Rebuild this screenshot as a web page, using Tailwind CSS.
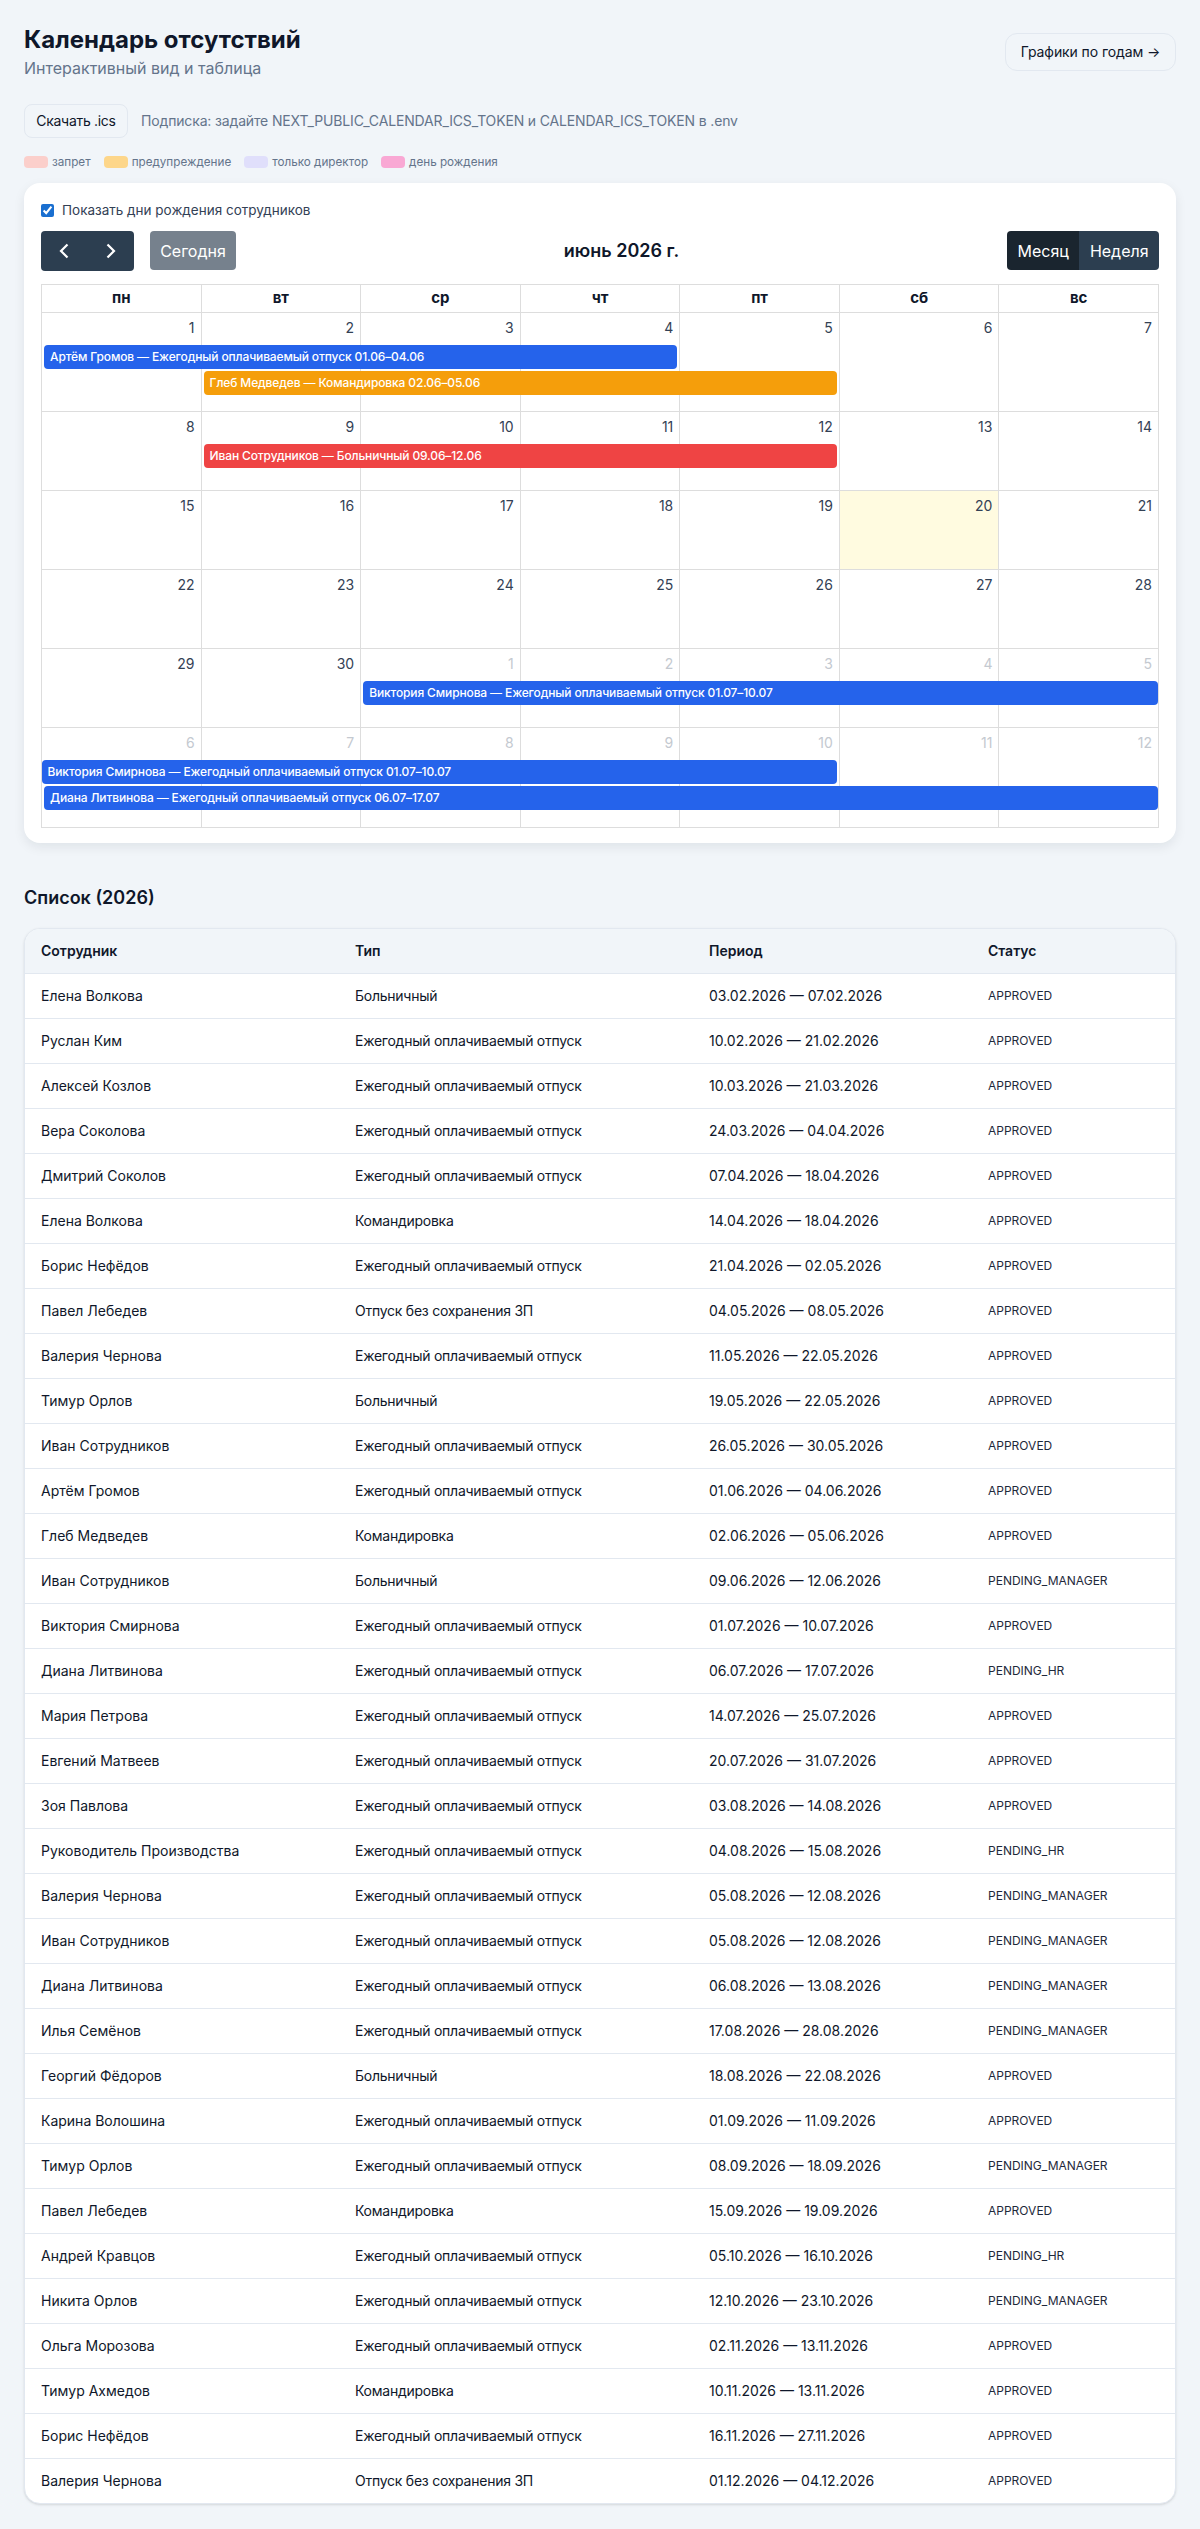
<!DOCTYPE html>
<html lang="ru">
<head>
  <meta charset="UTF-8">
  <title>Календарь отсутствий</title>
  <script src="https://cdn.jsdelivr.net/npm/@tailwindcss/browser@4"></script>
</head>
<body class="bg-[#f1f5f9] font-[Inter,sans-serif] text-[#0f172a]">
  <main class="px-6 pt-6 pb-[25px]">
    <!-- Header -->
    <header class="flex items-start justify-between">
      <div>
        <h1 class="text-2xl leading-8 font-bold">Календарь отсутствий</h1>
        <p class="text-base leading-6 text-[#64748b]">Интерактивный вид и таблица</p>
      </div>
      <a class="mt-[9px] h-[38px] w-[171px] flex items-center justify-center rounded-xl border border-[#e2e8f0] text-sm tracking-[-0.1px]">Графики по годам →</a>
    </header>

    <div class="mt-6 flex items-center gap-[13px]">
      <a class="h-[34px] w-[104px] flex items-center justify-center rounded-lg border border-[#e2e8f0] text-sm tracking-[-0.3px]">Скачать .ics</a>
      <span class="text-sm tracking-[-0.15px] text-[#64748b]">Подписка: задайте NEXT_PUBLIC_CALENDAR_ICS_TOKEN и CALENDAR_ICS_TOKEN в .env</span>
    </div>

    <!-- Legend -->
    <ul class="mt-[18px] flex items-center gap-[13px] text-[11.7px] leading-3 text-[#64748b]">
      <li class="flex items-center gap-1"><span class="w-6 h-3 rounded bg-[#fbcfcb]"></span>запрет</li>
      <li class="flex items-center gap-1"><span class="w-6 h-3 rounded bg-[#fdd68a]"></span>предупреждение</li>
      <li class="flex items-center gap-1"><span class="w-6 h-3 rounded bg-[#e0dffb]"></span>только директор</li>
      <li class="flex items-center gap-1"><span class="w-6 h-3 rounded bg-[#f9a8d4]"></span>день рождения</li>
    </ul>

    <!-- Calendar card -->
    <section class="mt-[15px] bg-white rounded-2xl shadow-[0_4px_12px_rgba(15,23,42,0.08)] px-[17px] pt-[21px] pb-[15px]">
      <label class="flex items-center gap-2 h-3 text-[13.5px] text-[#334155]">
        <input type="checkbox" checked class="w-[13px] h-[13px] accent-[#1a6fd0]">
        Показать дни рождения сотрудников
      </label>

      <div class="mt-[15px] flex items-center justify-between">
        <div class="flex items-start gap-4">
          <div class="flex h-10 rounded bg-[#2c3e50] text-white">
            <span class="w-[46.5px] flex items-center justify-center">
              <svg class="w-4 h-4" viewBox="0 0 16 16" fill="none" stroke="currentColor" stroke-width="2.2"><path d="M11.5 1.5 5 8l6.5 6.5"/></svg>
            </span>
            <span class="w-[46.5px] flex items-center justify-center">
              <svg class="w-4 h-4" viewBox="0 0 16 16" fill="none" stroke="currentColor" stroke-width="2.2"><path d="M4.5 1.5 11 8l-6.5 6.5"/></svg>
            </span>
          </div>
          <span class="h-[39px] w-[86px] flex items-center justify-center rounded bg-[#2c3e50]/65 text-white">Сегодня</span>
        </div>
        <h2 class="text-lg font-semibold">июнь 2026 г.</h2>
        <div class="flex self-start h-[39px] rounded overflow-hidden text-white">
          <span class="w-[72.5px] flex items-center justify-center bg-[#1a252f]">Месяц</span>
          <span class="w-[79.5px] flex items-center justify-center bg-[#2c3e50]">Неделя</span>
        </div>
      </div>

      <!-- Month grid -->
      <div class="mt-[13px] border-t border-l border-[#ddd]">
        <div class="grid grid-cols-7 h-[28px] text-[15px] font-bold">
          <div class="border-r border-b border-[#ddd] flex items-center justify-center">пн</div>
          <div class="border-r border-b border-[#ddd] flex items-center justify-center">вт</div>
          <div class="border-r border-b border-[#ddd] flex items-center justify-center">ср</div>
          <div class="border-r border-b border-[#ddd] flex items-center justify-center">чт</div>
          <div class="border-r border-b border-[#ddd] flex items-center justify-center">пт</div>
          <div class="border-r border-b border-[#ddd] flex items-center justify-center">сб</div>
          <div class="border-r border-b border-[#ddd] flex items-center justify-center">вс</div>
        </div>

        <!-- week 1 -->
        <div class="grid grid-cols-7 grid-rows-[32px_26px_26px_1fr] h-[99px] text-sm text-[#334155] [&>.d]:row-span-full [&>.d]:border-r [&>.d]:border-b [&>.d]:border-[#ddd] [&>.d]:text-right [&>.d]:px-1.5 [&>.d]:pt-[5px]">
          <div class="d col-start-1">1</div><div class="d col-start-2">2</div><div class="d col-start-3">3</div><div class="d col-start-4">4</div><div class="d col-start-5">5</div><div class="d col-start-6">6</div><div class="d col-start-7">7</div>
          <div class="col-start-1 col-end-5 row-start-2 ml-[2px] mr-[3px] h-6 rounded bg-[#2563eb] text-white text-xs tracking-[-0.13px] font-medium leading-[23px] px-1.5">Артём Громов — Ежегодный оплачиваемый отпуск 01.06–04.06</div>
          <div class="col-start-2 col-end-6 row-start-3 ml-[2px] mr-[3px] h-6 rounded bg-[#f59e0b] text-white text-xs tracking-[-0.13px] font-medium leading-[23px] px-1.5">Глеб Медведев — Командировка 02.06–05.06</div>
        </div>

        <!-- week 2 -->
        <div class="grid grid-cols-7 grid-rows-[32px_26px_1fr] h-[79px] text-sm text-[#334155] [&>.d]:row-span-full [&>.d]:border-r [&>.d]:border-b [&>.d]:border-[#ddd] [&>.d]:text-right [&>.d]:px-1.5 [&>.d]:pt-[5px]">
          <div class="d col-start-1">8</div><div class="d col-start-2">9</div><div class="d col-start-3">10</div><div class="d col-start-4">11</div><div class="d col-start-5">12</div><div class="d col-start-6">13</div><div class="d col-start-7">14</div>
          <div class="col-start-2 col-end-6 row-start-2 ml-[2px] mr-[3px] h-6 rounded bg-[#ef4444] text-white text-xs tracking-[-0.13px] font-medium leading-[23px] px-1.5">Иван Сотрудников — Больничный 09.06–12.06</div>
        </div>

        <!-- week 3 -->
        <div class="grid grid-cols-7 h-[79px] text-sm text-[#334155] [&>.d]:border-r [&>.d]:border-b [&>.d]:border-[#ddd] [&>.d]:text-right [&>.d]:px-1.5 [&>.d]:pt-[5px]">
          <div class="d">15</div><div class="d">16</div><div class="d">17</div><div class="d">18</div><div class="d">19</div><div class="d bg-[#fffbe0]">20</div><div class="d">21</div>
        </div>

        <!-- week 4 -->
        <div class="grid grid-cols-7 h-[79px] text-sm text-[#334155] [&>.d]:border-r [&>.d]:border-b [&>.d]:border-[#ddd] [&>.d]:text-right [&>.d]:px-1.5 [&>.d]:pt-[5px]">
          <div class="d">22</div><div class="d">23</div><div class="d">24</div><div class="d">25</div><div class="d">26</div><div class="d">27</div><div class="d">28</div>
        </div>

        <!-- week 5 -->
        <div class="grid grid-cols-7 grid-rows-[32px_26px_1fr] h-[79px] text-sm text-[#334155] [&>.d]:row-span-full [&>.d]:border-r [&>.d]:border-b [&>.d]:border-[#ddd] [&>.d]:text-right [&>.d]:px-1.5 [&>.d]:pt-[5px]">
          <div class="d col-start-1">29</div><div class="d col-start-2">30</div><div class="d col-start-3 text-[#c4c9d0]">1</div><div class="d col-start-4 text-[#c4c9d0]">2</div><div class="d col-start-5 text-[#c4c9d0]">3</div><div class="d col-start-6 text-[#c4c9d0]">4</div><div class="d col-start-7 text-[#c4c9d0]">5</div>
          <div class="col-start-3 col-end-8 row-start-2 ml-[2px] mr-px h-6 rounded bg-[#2563eb] text-white text-xs tracking-[-0.13px] font-medium leading-[23px] px-1.5">Виктория Смирнова — Ежегодный оплачиваемый отпуск 01.07–10.07</div>
        </div>

        <!-- week 6 -->
        <div class="grid grid-cols-7 grid-rows-[32px_26px_26px_1fr] h-[100px] text-sm text-[#334155] [&>.d]:row-span-full [&>.d]:border-r [&>.d]:border-b [&>.d]:border-[#ddd] [&>.d]:text-right [&>.d]:px-1.5 [&>.d]:pt-[5px]">
          <div class="d col-start-1 text-[#c4c9d0]">6</div><div class="d col-start-2 text-[#c4c9d0]">7</div><div class="d col-start-3 text-[#c4c9d0]">8</div><div class="d col-start-4 text-[#c4c9d0]">9</div><div class="d col-start-5 text-[#c4c9d0]">10</div><div class="d col-start-6 text-[#c4c9d0]">11</div><div class="d col-start-7 text-[#c4c9d0]">12</div>
          <div class="col-start-1 col-end-6 row-start-2 mr-[3px] h-6 rounded bg-[#2563eb] text-white text-xs tracking-[-0.13px] font-medium leading-[23px] px-[5.5px]">Виктория Смирнова — Ежегодный оплачиваемый отпуск 01.07–10.07</div>
          <div class="col-start-1 col-end-8 row-start-3 ml-[2px] mr-px h-6 rounded bg-[#2563eb] text-white text-xs tracking-[-0.13px] font-medium leading-[23px] px-1.5">Диана Литвинова — Ежегодный оплачиваемый отпуск 06.07–17.07</div>
        </div>
      </div>
    </section>

    <!-- List -->
    <h2 class="mt-[43px] text-lg leading-6 font-semibold">Список (2026)</h2>
    <div class="mt-[18px] bg-white rounded-2xl border border-[#e2e8f0] shadow-sm overflow-hidden">
      <table class="w-full table-fixed text-sm [&_td]:px-4 [&_th]:px-4 [&_tbody_tr]:h-[45px] [&_thead_tr]:h-[44px] [&_tbody_tr]:border-t [&_tbody_tr]:border-[#e2e8f0]">
        <colgroup><col class="w-[314px]"><col class="w-[354px]"><col class="w-[279px]"><col></colgroup>
        <thead class="bg-[#f1f5f9] text-left">
          <tr><th class="font-semibold">Сотрудник</th><th class="font-semibold">Тип</th><th class="font-semibold">Период</th><th class="font-semibold">Статус</th></tr>
        </thead>
        <tbody class="[&_td:nth-child(2)]:tracking-[-0.25px] [&_td:last-child]:text-xs [&_td:last-child]:text-[#1e293b]">
          <tr><td>Елена Волкова</td><td>Больничный</td><td>03.02.2026 — 07.02.2026</td><td>APPROVED</td></tr>
          <tr><td>Руслан Ким</td><td>Ежегодный оплачиваемый отпуск</td><td>10.02.2026 — 21.02.2026</td><td>APPROVED</td></tr>
          <tr><td>Алексей Козлов</td><td>Ежегодный оплачиваемый отпуск</td><td>10.03.2026 — 21.03.2026</td><td>APPROVED</td></tr>
          <tr><td>Вера Соколова</td><td>Ежегодный оплачиваемый отпуск</td><td>24.03.2026 — 04.04.2026</td><td>APPROVED</td></tr>
          <tr><td>Дмитрий Соколов</td><td>Ежегодный оплачиваемый отпуск</td><td>07.04.2026 — 18.04.2026</td><td>APPROVED</td></tr>
          <tr><td>Елена Волкова</td><td>Командировка</td><td>14.04.2026 — 18.04.2026</td><td>APPROVED</td></tr>
          <tr><td>Борис Нефёдов</td><td>Ежегодный оплачиваемый отпуск</td><td>21.04.2026 — 02.05.2026</td><td>APPROVED</td></tr>
          <tr><td>Павел Лебедев</td><td>Отпуск без сохранения ЗП</td><td>04.05.2026 — 08.05.2026</td><td>APPROVED</td></tr>
          <tr><td>Валерия Чернова</td><td>Ежегодный оплачиваемый отпуск</td><td>11.05.2026 — 22.05.2026</td><td>APPROVED</td></tr>
          <tr><td>Тимур Орлов</td><td>Больничный</td><td>19.05.2026 — 22.05.2026</td><td>APPROVED</td></tr>
          <tr><td>Иван Сотрудников</td><td>Ежегодный оплачиваемый отпуск</td><td>26.05.2026 — 30.05.2026</td><td>APPROVED</td></tr>
          <tr><td>Артём Громов</td><td>Ежегодный оплачиваемый отпуск</td><td>01.06.2026 — 04.06.2026</td><td>APPROVED</td></tr>
          <tr><td>Глеб Медведев</td><td>Командировка</td><td>02.06.2026 — 05.06.2026</td><td>APPROVED</td></tr>
          <tr><td>Иван Сотрудников</td><td>Больничный</td><td>09.06.2026 — 12.06.2026</td><td>PENDING_MANAGER</td></tr>
          <tr><td>Виктория Смирнова</td><td>Ежегодный оплачиваемый отпуск</td><td>01.07.2026 — 10.07.2026</td><td>APPROVED</td></tr>
          <tr><td>Диана Литвинова</td><td>Ежегодный оплачиваемый отпуск</td><td>06.07.2026 — 17.07.2026</td><td>PENDING_HR</td></tr>
          <tr><td>Мария Петрова</td><td>Ежегодный оплачиваемый отпуск</td><td>14.07.2026 — 25.07.2026</td><td>APPROVED</td></tr>
          <tr><td>Евгений Матвеев</td><td>Ежегодный оплачиваемый отпуск</td><td>20.07.2026 — 31.07.2026</td><td>APPROVED</td></tr>
          <tr><td>Зоя Павлова</td><td>Ежегодный оплачиваемый отпуск</td><td>03.08.2026 — 14.08.2026</td><td>APPROVED</td></tr>
          <tr><td>Руководитель Производства</td><td>Ежегодный оплачиваемый отпуск</td><td>04.08.2026 — 15.08.2026</td><td>PENDING_HR</td></tr>
          <tr><td>Валерия Чернова</td><td>Ежегодный оплачиваемый отпуск</td><td>05.08.2026 — 12.08.2026</td><td>PENDING_MANAGER</td></tr>
          <tr><td>Иван Сотрудников</td><td>Ежегодный оплачиваемый отпуск</td><td>05.08.2026 — 12.08.2026</td><td>PENDING_MANAGER</td></tr>
          <tr><td>Диана Литвинова</td><td>Ежегодный оплачиваемый отпуск</td><td>06.08.2026 — 13.08.2026</td><td>PENDING_MANAGER</td></tr>
          <tr><td>Илья Семёнов</td><td>Ежегодный оплачиваемый отпуск</td><td>17.08.2026 — 28.08.2026</td><td>PENDING_MANAGER</td></tr>
          <tr><td>Георгий Фёдоров</td><td>Больничный</td><td>18.08.2026 — 22.08.2026</td><td>APPROVED</td></tr>
          <tr><td>Карина Волошина</td><td>Ежегодный оплачиваемый отпуск</td><td>01.09.2026 — 11.09.2026</td><td>APPROVED</td></tr>
          <tr><td>Тимур Орлов</td><td>Ежегодный оплачиваемый отпуск</td><td>08.09.2026 — 18.09.2026</td><td>PENDING_MANAGER</td></tr>
          <tr><td>Павел Лебедев</td><td>Командировка</td><td>15.09.2026 — 19.09.2026</td><td>APPROVED</td></tr>
          <tr><td>Андрей Кравцов</td><td>Ежегодный оплачиваемый отпуск</td><td>05.10.2026 — 16.10.2026</td><td>PENDING_HR</td></tr>
          <tr><td>Никита Орлов</td><td>Ежегодный оплачиваемый отпуск</td><td>12.10.2026 — 23.10.2026</td><td>PENDING_MANAGER</td></tr>
          <tr><td>Ольга Морозова</td><td>Ежегодный оплачиваемый отпуск</td><td>02.11.2026 — 13.11.2026</td><td>APPROVED</td></tr>
          <tr><td>Тимур Ахмедов</td><td>Командировка</td><td>10.11.2026 — 13.11.2026</td><td>APPROVED</td></tr>
          <tr><td>Борис Нефёдов</td><td>Ежегодный оплачиваемый отпуск</td><td>16.11.2026 — 27.11.2026</td><td>APPROVED</td></tr>
          <tr><td>Валерия Чернова</td><td>Отпуск без сохранения ЗП</td><td>01.12.2026 — 04.12.2026</td><td>APPROVED</td></tr>
        </tbody>
      </table>
    </div>
  </main>
</body>
</html>
